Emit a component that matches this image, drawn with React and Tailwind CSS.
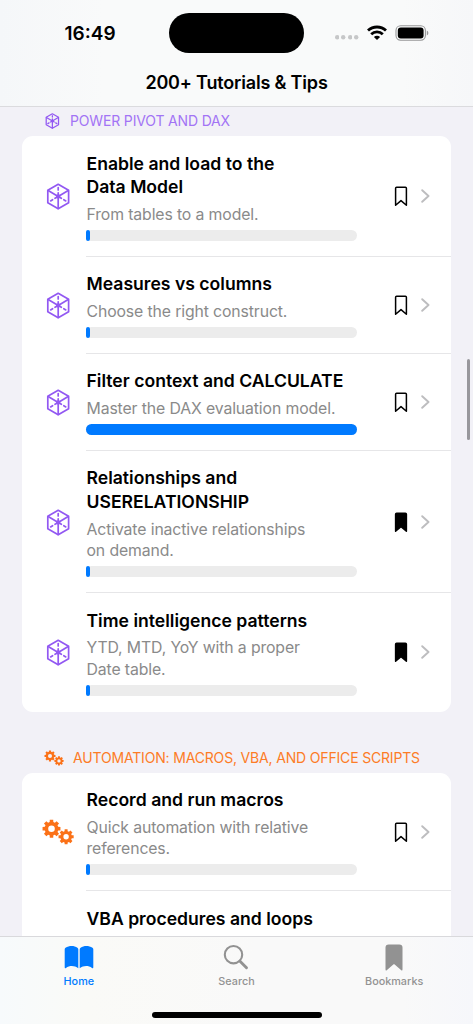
import React from "react";

const sections = [
    {
        title: "POWER PIVOT AND DAX",
        icon: "cube",
        headClass: "text-[#a274f5] tracking-[-0.16px] h-[29px] pb-[2px] pl-[45px] gap-[10.5px]",
        items: [
            { title: ["Enable and load to the", "Data Model"], text: ["From tables to a model."], progress: 1.6 },
            { title: ["Measures vs columns"], text: ["Choose the right construct."], progress: 1.6 },
            { title: ["Filter context and CALCULATE"], text: ["Master the DAX evaluation model."], progress: 100 },
            { title: ["Relationships and", "USERELATIONSHIP"], text: ["Activate inactive relationships", "on demand."], progress: 1.6, saved: true },
            { title: ["Time intelligence patterns"], text: ["YTD, MTD, YoY with a proper", "Date table."], progress: 1.6, saved: true },
        ],
    },
    {
        title: "AUTOMATION: MACROS, VBA, AND OFFICE SCRIPTS",
        icon: "gears",
        headClass: "text-[#fd7c26] tracking-[-0.17px] h-[61px] pt-[31px] pl-[44px] gap-[9px]",
        items: [
            { title: ["Record and run macros"], text: ["Quick automation with relative", "references."], progress: 1.6 },
            { title: ["VBA procedures and loops"], text: [], progress: 1.6 },
        ],
    },
];

function CubeIcon({ className, strokeWidth = 1.7 }) {
    return (
        <svg viewBox="0 0 24 27" className={className} fill="none" stroke="#9258f2" strokeWidth={strokeWidth} strokeLinejoin="round" strokeLinecap="round">
            <path d="M12.2 1.3 22.6 7.3V19.7L12.2 25.7 1.8 19.7V7.3Z" />
            <path d="M12.2 13.5V25.5M12.2 13.5 2.2 7.6M12.2 13.5 22.2 7.6" />
            <path d="M12.2 13.5V9.8M12.2 6.9V4.6M12.2 13.5 9 15.3M6.6 16.7 4.6 17.9M12.2 13.5 15.4 15.3M17.8 16.7 19.8 17.9" />
            <circle cx="12.2" cy="13.5" r="1.3" fill="#9258f2" />
        </svg>
    );
}

// gear outline with 8 teeth and a round hole
function gearPath(cx, cy, r, hole) {
    const root = r * 0.76;
    const pts = [];
    for (let i = 0; i < 8; i++) {
        const a = (i * Math.PI) / 4 - Math.PI / 2;
        [[-0.27, root], [-0.19, r], [0.19, r], [0.27, root]].forEach(([d, rad]) => {
            pts.push(`${(cx + rad * Math.cos(a + d)).toFixed(2)} ${(cy + rad * Math.sin(a + d)).toFixed(2)}`);
        });
    }
    return `M${pts.join("L")}ZM${cx - hole} ${cy}a${hole} ${hole} 0 1 0 ${hole * 2} 0a${hole} ${hole} 0 1 0 ${-hole * 2} 0Z`;
}

function GearsIcon({ className }) {
    return (
        <svg viewBox="0 0 32 26" className={className} fill="#fb7117" fillRule="evenodd">
            <path d={gearPath(9.5, 9.7, 9.1, 3.3)} />
            <path d={gearPath(24.1, 17.8, 7.7, 2.7)} />
        </svg>
    );
}

function BookmarkIcon({ saved }) {
    return (
        <svg viewBox="0 0 14 21" className="mt-[1.5px] h-[21px] w-[14px] shrink-0" fill={saved ? "#000" : "none"} stroke="#000" strokeWidth="1.5" strokeLinejoin="round">
            <path d="M1.6 2.2Q1.6 1.2 2.6 1.2H11.4Q12.4 1.2 12.4 2.2V19.2L7 14.6 1.6 19.2Z" />
        </svg>
    );
}

function Row({ item, icon, last }) {
    return (
        <div className="flex">
            <div className="flex w-[64px] shrink-0 items-center justify-center pt-px pl-[8px]">
                {icon === "cube" ? <CubeIcon className="h-[27px] w-[24px]" /> : <GearsIcon className="h-[26px] w-[32px]" />}
            </div>
            <div className={`flex flex-1 items-center border-b ${last ? "border-transparent" : "border-[#e6e6e8]"}`}>
                <div className="w-[271px] pt-[15.6px] pb-[15px]">
                    <div className="pl-[0.5px] text-[17.6px] leading-[23.8px] font-semibold whitespace-nowrap text-black">
                        {item.title.map((line) => (
                            <div key={line}>{line}</div>
                        ))}
                    </div>
                    <div className={`mt-[4.8px] pl-[0.5px] text-[15.8px] leading-[21.6px] tracking-[-0.12px] whitespace-nowrap text-[#8a8a8a] ${item.text.length ? "" : "h-[43.2px]"}`}>
                        {item.text.map((line) => (
                            <div key={line}>{line}</div>
                        ))}
                    </div>
                    <div className="mt-[4.2px] h-[11px] rounded-full bg-[#ececec]">
                        <div className="h-full rounded-full bg-[#007aff]" style={{ width: `${item.progress}%` }}></div>
                    </div>
                </div>
                <div className="ml-[36.5px] flex items-center gap-[13px]">
                    <BookmarkIcon saved={item.saved} />
                    <svg viewBox="0 0 9 14" className="mt-[1px] h-[14px] w-[9px]" fill="none" stroke="#bdbdbf" strokeWidth="1.9" strokeLinecap="round" strokeLinejoin="round">
                        <path d="M1.2 1.2 7.5 7 1.2 12.8" />
                    </svg>
                </div>
            </div>
        </div>
    );
}

function StatusBar() {
    return (
        <div className="flex h-[65px] items-center">
            <div className="mt-[2.5px] ml-[64.5px] w-[104.5px] text-[19px] font-semibold">16:49</div>
            <div className="h-10 w-[135px] rounded-full bg-black"></div>
            <div className="mt-[10px] ml-[31px] flex gap-[2px]">
                {[0, 1, 2, 3].map((n) => (
                    <svg key={n} viewBox="0 0 4.4 4.4" className="size-[4.4px]" fill="#c6c7c8">
                        <circle cx="2.2" cy="2.2" r="2.2" />
                    </svg>
                ))}
            </div>
            <svg viewBox="0 0 20 16" className="ml-[8.5px] h-4 w-5" fill="none" stroke="#000" strokeWidth="2.8">
                <path d="M1 5.6A13 13 0 0 1 19 5.6" />
                <path d="M4.2 9.3A8.3 8.3 0 0 1 15.8 9.3" />
                <path d="M10 15.1 6.9 12.1A4.4 4.4 0 0 1 13.1 12.1Z" fill="#000" stroke="none" />
            </svg>
            <svg viewBox="0 0 34 16" className="ml-[8px] h-4 w-[34px]">
                <rect x="1" y=".8" width="29.4" height="14.4" rx="4.6" fill="none" stroke="#969798" strokeWidth="1.1" />
                <rect x="2.8" y="2.6" width="25.8" height="10.8" rx="3" />
                <path d="M31.8 5.6Q33.4 6.2 33.4 8T31.8 10.4Z" fill="#969798" />
            </svg>
        </div>
    );
}

function TabBar() {
    return (
        <footer className="relative z-10 flex h-[88px] shrink-0 flex-col items-center border-t border-[#d9d9dc] bg-[linear-gradient(90deg,#f7fafc,#fafaf7_18%,#f9f9f9_55%,#f9f9f9_85%,#f6f7fb)] text-[10.8px] leading-4 font-medium tracking-[0.02px] text-[#929292]">
            <div className="grid h-[75px] w-full grid-cols-3">
                <div className="flex flex-col items-center text-[#007aff]">
                    <svg viewBox="0 0 30 24" className="mt-[8px] h-6 w-[30px]" fill="currentColor">
                        <path d="M.7 4.2Q.7 3.3 1.5 2.7C5.2.3 10.2.2 13.4 2.8Q14.3 3.5 14.3 4.6V23.2C10.5 20.4 5.6 20.4 2 22.9Q.7 23.7.7 22.3Z" />
                        <path d="M29.3 4.2Q29.3 3.3 28.5 2.7C24.8.3 19.8.2 16.6 2.8Q15.7 3.5 15.7 4.6V23.2C19.5 20.4 24.4 20.4 28 22.9Q29.3 23.7 29.3 22.3Z" />
                    </svg>
                    <span className="mt-[5px]">Home</span>
                </div>
                <div className="flex flex-col items-center">
                    <svg viewBox="0 0 26 26" className="mt-[7px] h-[26px] w-[26px]" fill="none" stroke="currentColor" strokeLinecap="round">
                        <circle cx="10.5" cy="10.7" r="8.7" strokeWidth="2.1" />
                        <path d="M17 17.3 23.5 23.8" strokeWidth="2.9" />
                    </svg>
                    <span className="mt-[4px]">Search</span>
                </div>
                <div className="flex flex-col items-center">
                    <svg viewBox="0 0 18 27" className="mt-[7px] h-[27px] w-[18px]" fill="currentColor">
                        <path d="M.5 3.6Q.5.4 3.7.4H14.3Q17.5.4 17.5 3.6V25.3Q17.5 27.4 16 26L9.4 20.3Q9 20 8.6 20.3L2 26Q.5 27.4.5 25.3Z" />
                    </svg>
                    <span className="mt-[3px]">Bookmarks</span>
                </div>
            </div>
            <div className="h-[5.5px] w-[170px] rounded-full bg-black"></div>
        </footer>
    );
}

export default function App() {
    return (
        <div className="relative flex h-[1024px] w-[473px] flex-col overflow-hidden bg-[#f2f1f7] font-['Inter',sans-serif]">
            <header className="h-[107px] shrink-0 border-b border-[#dbdbde] bg-[linear-gradient(90deg,#f5f7f9,#f9fafa_22%,#f9fafa_85%,#f6f7f9)]">
                <StatusBar />
                <h1 className="pt-[5px] text-center text-[18px] leading-[26px] font-semibold tracking-[-0.18px]">200+ Tutorials &amp; Tips</h1>
            </header>

            <main className="min-h-0 flex-1 overflow-hidden">
                {sections.map((s) => (
                    <section key={s.title}>
                        <div className={`flex items-center text-[14px] whitespace-nowrap ${s.headClass}`}>
                            {s.icon === "cube" ? <CubeIcon className="h-[16px] w-[14.5px]" strokeWidth={2.1} /> : <GearsIcon className="h-[16px] w-[20px]" />}
                            <h2>{s.title}</h2>
                        </div>
                        <div className="mx-[22px] rounded-[11px] bg-white">
                            {s.items.map((item, i) => (
                                <Row key={i} item={item} icon={s.icon} last={i === s.items.length - 1} />
                            ))}
                        </div>
                    </section>
                ))}
            </main>

            <TabBar />
            {/* scroll indicator */}
            <div className="absolute top-[359px] right-[3px] h-[81px] w-[3.5px] rounded-full bg-[#98979c]"></div>
        </div>
    );
}
